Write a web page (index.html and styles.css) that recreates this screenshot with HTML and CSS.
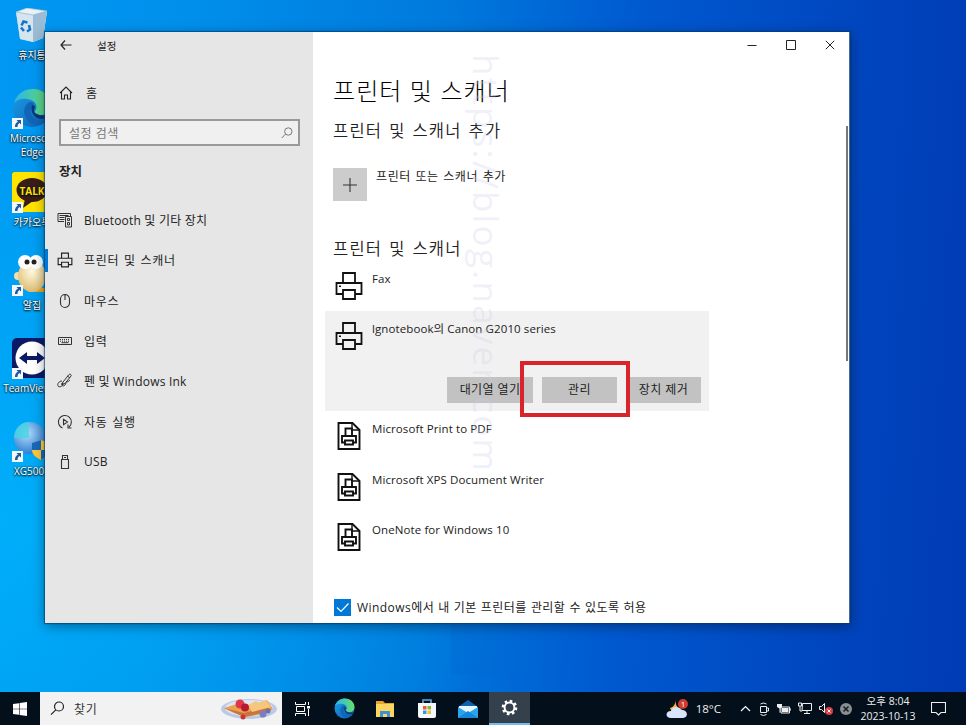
FILE: index.html
```html
<!DOCTYPE html>
<html lang="ko">
<head>
    <meta charset="UTF-8">
    <meta name="viewport" content="width=device-width, initial-scale=1.0">
    <title>설정</title>
    <link rel="stylesheet" href="styles.css">
</head>
<body>

<svg class="defs" width="0" height="0">
    <defs>
        <linearGradient id="edge-a" x1="0" y1="0" x2="1" y2="0"><stop offset="0" stop-color="#2ab5ed"/><stop offset="1" stop-color="#68df66"/></linearGradient>
        <linearGradient id="edge-b" x1="0" y1="0" x2="1" y2="1"><stop offset="0" stop-color="#1aa0e8"/><stop offset="1" stop-color="#0c5cb4"/></linearGradient>
        <radialGradient id="globe" cx=".4" cy=".35" r=".7"><stop offset="0" stop-color="#b4ddfa"/><stop offset="1" stop-color="#2577d0"/></radialGradient>
        <radialGradient id="egg" cx=".5" cy=".35" r=".7"><stop offset="0" stop-color="#fffbe2"/><stop offset="1" stop-color="#dbb76a"/></radialGradient>
    </defs>
    <symbol id="edge" viewBox="0 0 40 40">
        <circle cx="20" cy="20" r="19" fill="url(#edge-b)"/>
        <path d="M2 15C5 5 13 1 21 1c11 0 18 8 18 16 0 7-5 10-10 10-4 0-7-2-6-4 3-3 2-11-8-12C9 10 5 12 2 15z" fill="url(#edge-a)"/>
        <path d="M16 15c-7 6-4 18 6 22 6 1 11-2 14-6-7 3-15 1-17-5-1-4 0-8 3-10-2-2-4-2-6-1z" fill="#1464b4"/>
        <path d="M20 17c-2 7 2 13 9 14 4 0 7-1 9-4-4 1-9 1-13-1-3-1-4-4-2-6 0-2-1-3-3-3z" fill="#0a3878"/>
    </symbol>
    <symbol id="shortcut" viewBox="0 0 11 11">
        <path d="M0 0h11v11H0z" fill="#f3f6fa"/>
        <path d="M4.500 2H9v4.500L7.500 5C6 6 5.500 7.500 5.500 9H3C2.800 6.500 4 4.500 6 3.500z" fill="#21599f"/>
    </symbol>
    <symbol id="printer" viewBox="0 0 28 28">
        <g fill="none" stroke="#111" stroke-width="1.800"><path d="M8 11V1h12v10M8 22H1.500V11h25v11H20"/><path d="M8 18h12v9H8z"/></g>
        <path d="M4 13.500h2v1.500H4z" fill="#111"/>
    </symbol>
    <symbol id="docprinter" viewBox="0 0 24 28">
        <g fill="none" stroke="#111" stroke-width="1.900"><path d="M1.500 1h14l7 7v19h-21z"/><path d="M15 1v7h7.500" stroke-width="1.400"/><path d="M8.500 14V6.500H15V14M8 20.500H5V14h14v6.500h-3M8 18.500h8v4H8z"/></g>
    </symbol>
</svg>

<div class="desktop">
    <div class="shade"></div>

    <!-- Desktop shortcuts -->
    <div class="shortcut bin">
        <svg width="34" height="37" viewBox="0 0 34 37"><path d="M1 4l11-4 20 3-4 27-10 4-13-3z" fill="#b9dbef"/><path d="M1 4l17 3 14-4-4 27-10 4-13-3z" fill="#d9e6ee" opacity=".85"/><path d="M18 7l14-4-4 27-10 4z" fill="#9bbcd4"/><path d="M1 4l11-4 20 3-14 4z" fill="#e8f1f5" stroke="#8eb5cc" stroke-width=".7"/><g fill="none" stroke="#1474c9" stroke-width="2.600"><path d="M6.500 17.500l2-4 4 1M14 17l1 4.500-3 2M9 23l-3-3.500"/></g></svg>
        <span>휴지통</span>
    </div>
    <div class="shortcut edge">
        <svg width="40" height="40"><use href="#edge"/></svg>
        <svg class="arrow" width="11" height="11"><use href="#shortcut"/></svg>
        <span>Microsoft<br>Edge</span>
    </div>
    <div class="shortcut talk">
        <svg width="40" height="40" viewBox="0 0 40 40"><rect width="40" height="40" rx="3" fill="#ffe400"/><ellipse cx="20" cy="18" rx="15.500" ry="12" fill="#391d1b"/><path d="M13 27l-2 9 10-7z" fill="#391d1b"/><text x="20" y="22.500" class="talk-text">TALK</text></svg>
        <svg class="arrow" width="11" height="11"><use href="#shortcut"/></svg>
        <span>카카오톡</span>
    </div>
    <div class="shortcut alzip">
        <svg width="36" height="40" viewBox="0 0 36 40"><path d="M16 33h17c4 2 2 4-1 4H14z" fill="#e9a51f"/><ellipse cx="4" cy="21" rx="4" ry="4" fill="#f1dfaa"/><ellipse cx="18" cy="21" rx="14" ry="16" fill="url(#egg)"/><circle cx="11" cy="7" r="7" fill="#fff"/><circle cx="22" cy="7" r="7" fill="#fff"/><circle cx="13" cy="7" r="2.500" fill="#222"/><circle cx="20" cy="7" r="2.500" fill="#222"/></svg>
        <svg class="arrow" width="11" height="11"><use href="#shortcut"/></svg>
        <span>알집</span>
    </div>
    <div class="shortcut teamviewer">
        <svg width="40" height="40" viewBox="0 0 40 40"><rect width="40" height="40" rx="5" fill="#0c1a66"/><circle cx="20" cy="20" r="16.500" fill="#fff"/><path d="M7 20l8-6v4h10v-4l8 6-8 6v-4H15v4z" fill="#0c1a66"/></svg>
        <svg class="arrow" width="11" height="11"><use href="#shortcut"/></svg>
        <span>TeamViewer</span>
    </div>
    <div class="shortcut xg">
        <svg width="36" height="40" viewBox="0 0 36 40"><circle cx="16" cy="17" r="16" fill="url(#globe)"/><path d="M15 1v16H0C0 8 6 1 15 1z" fill="#42d4e6" opacity=".8"/><path d="M18 22l9-3 8 3v7c0 5-5 8-8 10-4-2-9-5-9-10z" fill="#ffc83a"/><path d="M27 19v10h-9v-7zM27 29h8c0 5-5 8-8 10z" fill="#1769b8"/></svg>
        <svg class="arrow" width="11" height="11"><use href="#shortcut"/></svg>
        <span>XG5000</span>
    </div>

    <!-- Settings window -->
    <div class="window">
        <aside class="sidebar">
            <header class="caption">
                <svg width="12" height="10" viewBox="0 0 12 10"><path d="M5 .5L1 5l4 4.500M1 5h10.500" fill="none" stroke="#222" stroke-width="1.200"/></svg>
                <span>설정</span>
            </header>
            <a class="home">
                <svg width="14" height="14" viewBox="0 0 14 14"><path d="M1 7l6-6 6 6M2.500 6v7h3V9h3v4h3V6" fill="none" stroke="#222" stroke-width="1.100"/></svg>
                <span>홈</span>
            </a>
            <div class="search">
                <span>설정 검색</span>
                <svg width="12" height="12" viewBox="0 0 12 12"><circle cx="7.300" cy="4.500" r="3.700" fill="none" stroke="#777"/><path d="M4.500 7.200L.7 11" stroke="#777"/></svg>
            </div>
            <h3>장치</h3>
            <nav>
                <a>
                    <svg width="16" height="16" viewBox="0 0 16 16"><g fill="none" stroke="#333"><path d="M7 9.500H1v-8h12.500V4M8.500 4.500h6v10.500h-6zM2.500 3.500h9M2.500 5.500h5M2.500 7.500h5"/><path d="M10.500 6.500h2v2h-2zM10.500 10.500h2v2.500h-2z"/></g></svg>
                    <span>Bluetooth 및 기타 장치</span>
                </a>
                <a class="active">
                    <svg width="16" height="16" viewBox="0 0 28 28"><g fill="none" stroke="#222" stroke-width="2"><path d="M8 11V2h12v9M7 22H2V11h24v11h-5M8 18h12v8H8z"/></g></svg>
                    <span class="ko">프린터 및 스캐너</span>
                </a>
                <a>
                    <svg width="16" height="16" viewBox="0 0 16 16"><path d="M3.500 6a4.500 4.500 0 0 1 9 0v4a4.500 4.500 0 0 1-9 0zM8 1.500V7" fill="none" stroke="#333" stroke-width="1.100"/></svg>
                    <span class="ko">마우스</span>
                </a>
                <a>
                    <svg width="16" height="16" viewBox="0 0 16 16"><path d="M1.500 4.500h13v7h-13zM4.500 9.700h7" fill="none" stroke="#333"/><path d="M3 6.500h10M3 8.200h10" stroke="#333" stroke-dasharray="1 1"/></svg>
                    <span class="ko">입력</span>
                </a>
                <a>
                    <svg width="16" height="16" viewBox="0 0 16 16"><path d="M6 9l6-7.500c1-1 3 .5 2 1.500L8 10.500l-3 1zM9 9c2 0 3-1 4-2M5 8c-3 0-5 3-4 5s5 0 5-2-2-1-1 1 3 1 4-2M10.500 3l2.500 2" fill="none" stroke="#333"/></svg>
                    <span>펜 및 Windows Ink</span>
                </a>
                <a>
                    <svg width="16" height="16" viewBox="0 0 16 16"><path d="M5.500 14A6.500 6.500 0 1 1 12 13M11 10.500V14h3.500M6.500 5.300v5.400L10.500 8z" fill="none" stroke="#333" stroke-width="1.100"/></svg>
                    <span class="ko">자동 실행</span>
                </a>
                <a>
                    <svg width="16" height="16" viewBox="0 0 16 16"><path d="M4.500 5.500h7v9h-7zM5.500 5V1.500h5V5M7 3.500h2" fill="none" stroke="#333" stroke-width="1.100"/></svg>
                    <span>USB</span>
                </a>
            </nav>
        </aside>

        <main>
            <div class="controls">
                <svg width="10" height="10" viewBox="0 0 10 10"><path d="M.5 5.500h9" stroke="#222"/></svg>
                <svg width="10" height="10" viewBox="0 0 10 10"><path d="M.5.500h9v9h-9z" fill="none" stroke="#222"/></svg>
                <svg width="10" height="10" viewBox="0 0 10 10"><path d="M.8.800l8.400 8.400M9.200.800L.8 9.200" stroke="#222"/></svg>
            </div>
            <h1>프린터 및 스캐너</h1>
            <h2>프린터 및 스캐너 추가</h2>
            <div class="add">
                <div class="plus"><svg width="14" height="14" viewBox="0 0 14 14"><path d="M0 7h14M7 0v14" stroke="#333" stroke-width="1.100"/></svg></div>
                <span>프린터 또는 스캐너 추가</span>
            </div>
            <h2>프린터 및 스캐너</h2>
            <ul class="printers">
                <li><svg width="28" height="28"><use href="#printer"/></svg><span>Fax</span></li>
                <li class="selected">
                    <svg width="28" height="28"><use href="#printer"/></svg><span>lgnotebook의 Canon G2010 series</span>
                    <div class="buttons">
                        <button class="wide">대기열 열기</button>
                        <button>관리</button>
                        <button>장치 제거</button>
                    </div>
                </li>
                <li><svg width="28" height="28"><use href="#docprinter"/></svg><span>Microsoft Print to PDF</span></li>
                <li><svg width="28" height="28"><use href="#docprinter"/></svg><span>Microsoft XPS Document Writer</span></li>
                <li><svg width="28" height="28"><use href="#docprinter"/></svg><span>OneNote for Windows 10</span></li>
            </ul>
            <label class="default-printer">
                <svg width="17" height="17" viewBox="0 0 17 17"><path d="M0 0h17v17H0z" fill="#0078d7"/><path d="M3 8.500l4 4L14.500 4.500" fill="none" stroke="#fff" stroke-width="1.200"/></svg>
                <span>Windows에서 내 기본 프린터를 관리할 수 있도록 허용</span>
            </label>
            <div class="scrollbar"></div>
        </main>
    </div>

    <div class="highlight"></div>
    <div class="watermark">https://blog.naver.com</div>
</div>

<footer class="taskbar">
    <div class="start"><svg width="14" height="14" viewBox="0 0 14 14"><path d="M0 2l6-.8v5.500H0zM6.600 1.100L14 0v6.700H6.600zM0 7.300h6v5.500L0 12zM6.600 7.300H14V14l-7.400-1.100z" fill="#fff"/></svg></div>
    <div class="find">
        <svg width="15" height="15" viewBox="0 0 15 15"><circle cx="9" cy="5.500" r="4.500" fill="none" stroke="#222" stroke-width="1.200"/><path d="M5.800 8.800L1 13.700" stroke="#222" stroke-width="1.200"/></svg>
        <span>찾기</span>
        <svg class="food" width="58" height="22" viewBox="0 0 58 22"><ellipse cx="29" cy="11" rx="28" ry="10" fill="#b9c9ea"/><ellipse cx="29" cy="10" rx="24" ry="8" fill="#dfe5f5"/><path d="M4 10l13-4 11 3 19-7 6 9-11 5-16 3-12-4z" fill="#e9a34d"/><path d="M4 10l20 5 22-6 6 3-14 4-14 3z" fill="#c9743a"/><path d="M28 7l8-4 3 2 7-3 5 7-19 5z" fill="#f5c67c"/><circle cx="20" cy="6" r="4.500" fill="#e0364a"/><circle cx="25" cy="9.500" r="4" fill="#ba1734"/><circle cx="23" cy="19" r="2.500" fill="#c8352e"/><circle cx="43" cy="16" r="3.500" fill="#7c7ec0"/><circle cx="48" cy="13" r="2.500" fill="#6d72af"/></svg>
    </div>
    <div class="apps">
        <div><svg width="15" height="14" viewBox="0 0 15 14"><path d="M.5 0v2.500h10V0M.5 14v-2.500h10V14M1.500 4.500h8v5h-8zM13.500 0v3M13.500 7v7" fill="none" stroke="#fff"/><path d="M12 4h3v2.500h-3z" fill="#fff"/></svg></div>
        <div><svg width="21" height="21"><use href="#edge"/></svg></div>
        <div><svg width="20" height="18" viewBox="0 0 20 18"><path d="M1 1h7l2 2h9v13H1z" fill="#e6a52a"/><path d="M1 4h18v13H1z" fill="#ffd562"/><path d="M5 17v-6h10v6h-3v-3H8v3z" fill="#4091cf"/></svg></div>
        <div><svg width="20" height="21" viewBox="0 0 20 21"><path d="M6 6V2h8v4" fill="none" stroke="#55afe8" stroke-width="1.600"/><path d="M1 5h18v13q0 2-2 2H3q-2 0-2-2z" fill="#f6f7f8"/><path d="M6 8h3.500v3.500H6z" fill="#ed5c35"/><path d="M10.500 8H14v3.500h-3.500z" fill="#80b93e"/><path d="M6 12.500h3.500V16H6z" fill="#2b9ddf"/><path d="M10.500 12.500H14V16h-3.500z" fill="#f6bd2b"/></svg></div>
        <div><svg width="22" height="20" viewBox="0 0 22 20"><path d="M1 8l10-7 10 7v11H1z" fill="#1160ae"/><path d="M2 7h18v8H2z" fill="#e7f5ff"/><path d="M1 8l10 6 10-6v11H1z" fill="#2ca4ed"/><path d="M1 19l10-7 10 7z" fill="#1687da"/></svg></div>
        <div class="current"><svg width="17" height="17" viewBox="0 0 17 17"><circle cx="8.500" cy="8.500" r="6.600" fill="none" stroke="#fff" stroke-width="2.400" stroke-dasharray="2.600 2.584"/><circle cx="8.500" cy="8.500" r="4.900" fill="none" stroke="#fff" stroke-width="2"/></svg></div>
    </div>
    <div class="tray">
        <svg class="weather" width="23" height="20" viewBox="0 0 23 20"><path d="M10 1c-1 5 1 8 6 9-3 5-11 4-12-1 4-1 5-4 6-8z" fill="#f6b63d"/><path d="M5 19c-6 0-6-7 0-7 1-5 8-5 10-1 7-1 8 8 2 8z" fill="#d7e4fa"/><circle cx="17" cy="5" r="5" fill="#cf3b32"/><text x="17" y="8" class="badge-text">1</text></svg>
        <span class="temp">18°C</span>
        <svg width="11" height="7" viewBox="0 0 11 7"><path d="M1 6l4.500-4.500L10 6" fill="none" stroke="#fff" stroke-width="1.200"/></svg>
        <svg width="12" height="14" viewBox="0 0 12 14"><path d="M2.500 4.500h6v6h-6zM8.500 6h2v3h-2M2.500 2q3-2 6 0M2.500 12.500q3 2 6 0" fill="none" stroke="#eee"/></svg>
        <svg width="14" height="12" viewBox="0 0 14 12"><path d="M4 4h8.500v6H4zM12.500 6H14v2" fill="none" stroke="#eee"/><path d="M5 5h6.500v4H5zM0 1h5v3L3.500 5.500v4h-1v-4L0 4z" fill="#eee"/></svg>
        <svg width="14" height="13" viewBox="0 0 14 13"><path d="M4.500 1.500h9v7H4zM9 8.500v3M6 11.500h6M.5 1h3v3h-3zM2 4v5h2" fill="none" stroke="#eee"/></svg>
        <svg width="14" height="13" viewBox="0 0 14 13"><path d="M.5 4.500h2l3-3v9l-3-3h-2z" fill="none" stroke="#eee"/><circle cx="10" cy="9" r="4" fill="#d83d42"/><path d="M8.500 7.500l3 3M11.500 7.500l-3 3" stroke="#fff"/></svg>
        <svg width="12" height="12" viewBox="0 0 12 12"><circle cx="6" cy="6" r="6" fill="#8b8e91"/><path d="M3.500 3.500l5 5M8.500 3.500l-5 5" stroke="#171c22" stroke-width="1.500"/></svg>
        <div class="clock"><span>오후 8:04</span><span>2023-10-13</span></div>
        <svg class="note" width="15" height="15" viewBox="0 0 15 15"><path d="M.5 1.500h14v10H10L7.500 14 5 11.500H.5z" fill="none" stroke="#eee" stroke-width="1.100"/></svg>
    </div>
</footer>

</body>
</html>
```
FILE: styles.css
```css
* {
    box-sizing: border-box;
}
body {
    margin: 0;
    width: 966px;
    height: 725px;
    overflow: hidden;
    font-family: "Open Sans", "Noto Sans CJK KR", sans-serif;
    font-size: 12px;
    color: #222;
}
svg {
    display: block;
    flex: none;
}
.defs {
    position: absolute;
}
h1, h2, h3, ul {
    margin: 0;
    padding: 0;
    font-weight: normal;
}
.desktop {
    position: relative;
    height: 692px;
    background:
        radial-gradient(ellipse 520px 420px at 0 75%, rgba(0, 190, 255, 0.6), transparent),
        linear-gradient(93deg, #0098f2 0%, #0090ec 18%, #0079dc 45%, #0059d0 64%, #0044bd 88%, #003bb4 100%);
}
.shade {
    position: absolute;
    left: 451px;
    top: 622px;
    width: 80px;
    height: 53px;
    background: linear-gradient(90deg, rgba(0, 100, 205, 0.3), transparent);
}

/* desktop shortcuts */
.shortcut {
    position: absolute;
    left: -8px;
    width: 80px;
    display: flex;
    flex-direction: column;
    align-items: center;
    color: #fff;
    font-size: 10px;
    line-height: 14px;
    text-align: center;
    white-space: nowrap;
    text-shadow: 0 1px 2px #000, 0 0 2px #123;
}
.shortcut span {
    margin-top: 3px;
}
.shortcut .arrow {
    position: absolute;
    left: 20px;
    top: 30px;
}
.bin {
    top: 8px;
}
.edge {
    top: 88px;
}
.talk {
    top: 172px;
}
.alzip {
    top: 255px;
}
.teamviewer {
    top: 338px;
}
.xg {
    top: 421px;
}
.talk-text {
    font: bold 10px "Open Sans", sans-serif;
    fill: #ffe400;
    text-anchor: middle;
}

/* window */
.window {
    position: absolute;
    left: 45px;
    top: 32px;
    width: 805px;
    height: 591px;
    display: flex;
    background: #fff;
    border-right: 1px solid #456b9c;
    box-shadow: 0 0 1px 1px rgba(0, 60, 110, 0.6), 0 3px 12px rgba(0, 0, 0, 0.4);
}
.sidebar {
    width: 268px;
    background: #e6e6e6;
}
.caption {
    display: flex;
    align-items: center;
    height: 26px;
    padding-left: 15px;
    gap: 25px;
    font-size: 10.5px;
}
.home {
    display: flex;
    align-items: center;
    height: 24px;
    margin-top: 23px;
    margin-bottom: 14px;
    padding-left: 14px;
    gap: 13px;
}
.search {
    display: flex;
    align-items: center;
    justify-content: space-between;
    width: 241px;
    height: 27px;
    margin-left: 14px;
    padding: 0 5px 0 8px;
    border: 2px solid #999;
    background: #f0f0f0;
    color: #777;
    letter-spacing: 0.5px;
}
.sidebar h3 {
    margin: 16px 0 0 14px;
    font-size: 12.5px;
    font-weight: bold;
    line-height: 20px;
}
nav {
    margin-top: 18px;
}
nav a {
    display: flex;
    align-items: center;
    height: 40.3px;
    padding-left: 12px;
    gap: 11px;
    letter-spacing: 0.2px;
}
nav .ko {
    letter-spacing: 0.7px;
    word-spacing: 1px;
}
nav .active {
    padding-left: 9px;
    border-left: 3px solid #0078d7;
    border-image: linear-gradient(transparent 24%, #0078d7 24%, #0078d7 76%, transparent 76%) 1;
}
main {
    position: relative;
    flex: 1;
    padding-left: 20px;
    white-space: nowrap;
}
.controls {
    display: flex;
    align-items: center;
    justify-content: flex-end;
    height: 26px;
    gap: 29px;
    padding-right: 14px;
}
h1 {
    margin-top: 15px;
    font-size: 24px;
    font-weight: 300;
    line-height: 36px;
    letter-spacing: 1.1px;
    color: #000;
}
h2 {
    margin-top: 10px;
    font-size: 16.5px;
    font-weight: 350;
    line-height: 24px;
    letter-spacing: 1.2px;
    word-spacing: 1.5px;
}
.add {
    display: flex;
    margin: 25px 0 36px;
    gap: 9px;
    line-height: 17px;
    letter-spacing: 0.6px;
    word-spacing: 0.8px;
}
.plus {
    display: grid;
    place-items: center;
    width: 34px;
    height: 33px;
    background: #ccc;
}
.add + h2 {
    margin-top: 0;
}
.printers {
    width: 384px;
    margin-left: -8px;
    list-style: none;
}
.printers li {
    display: flex;
    flex-wrap: wrap;
    align-content: flex-start;
    height: 50.3px;
    padding: 11px 8px 0 10px;
    gap: 9px;
    font-size: 11.5px;
    line-height: 14px;
    letter-spacing: 0.1px;
}
.printers .selected {
    height: 100px;
    background: #f1f1f1;
}
.buttons {
    display: flex;
    width: 100%;
    justify-content: flex-end;
    gap: 9px;
    margin-top: 18px;
}
button {
    width: 75px;
    height: 26px;
    padding: 0;
    border: 0;
    background: #c2c2c2;
    font: inherit;
    font-size: 12px;
    letter-spacing: 0.4px;
    color: #222;
}
.wide {
    width: 86px;
}
.default-printer {
    display: flex;
    align-items: center;
    gap: 6px;
    margin-top: 36px;
    padding-left: 1px;
}
.default-printer span {
    letter-spacing: 0.45px;
    word-spacing: 0.5px;
}
.scrollbar {
    position: absolute;
    top: 94px;
    right: 1px;
    width: 2px;
    height: 235px;
    background: #777;
}
.highlight {
    position: absolute;
    left: 520px;
    top: 361px;
    width: 110px;
    height: 56px;
    border: 4px solid #d9242b;
}
.watermark {
    position: absolute;
    left: 466px;
    top: 54px;
    writing-mode: vertical-rl;
    font: 35px/40px "Open Sans", sans-serif;
    letter-spacing: 2.2px;
    color: rgba(205, 205, 235, 0.3);
}

/* taskbar */
.taskbar {
    display: flex;
    height: 33px;
    background: #03101b;
    color: #eee;
}
.start {
    display: grid;
    place-items: center;
    width: 40px;
}
.find {
    display: flex;
    align-items: center;
    width: 242px;
    padding: 0 4px 0 10px;
    gap: 9px;
    background: #f2f2f2;
    color: #333;
    letter-spacing: 0.6px;
}
.food {
    margin-left: auto;
}
.apps {
    display: flex;
}
.apps div {
    display: grid;
    place-items: center;
    width: 41.4px;
}
.apps .current {
    background: #34404c;
    border-bottom: 2px solid #76b9ed;
}
.tray {
    display: flex;
    align-items: center;
    margin-left: auto;
    padding-right: 20px;
    gap: 7px;
    white-space: nowrap;
}
.temp {
    margin-right: 12px;
    font-size: 11.5px;
}
.badge-text {
    font: 8px "Open Sans", sans-serif;
    fill: #fff;
    text-anchor: middle;
}
.clock {
    display: flex;
    flex-direction: column;
    align-items: center;
    width: 58px;
    font-size: 10.5px;
    line-height: 15px;
}
.note {
    margin-left: 7px;
}
```
